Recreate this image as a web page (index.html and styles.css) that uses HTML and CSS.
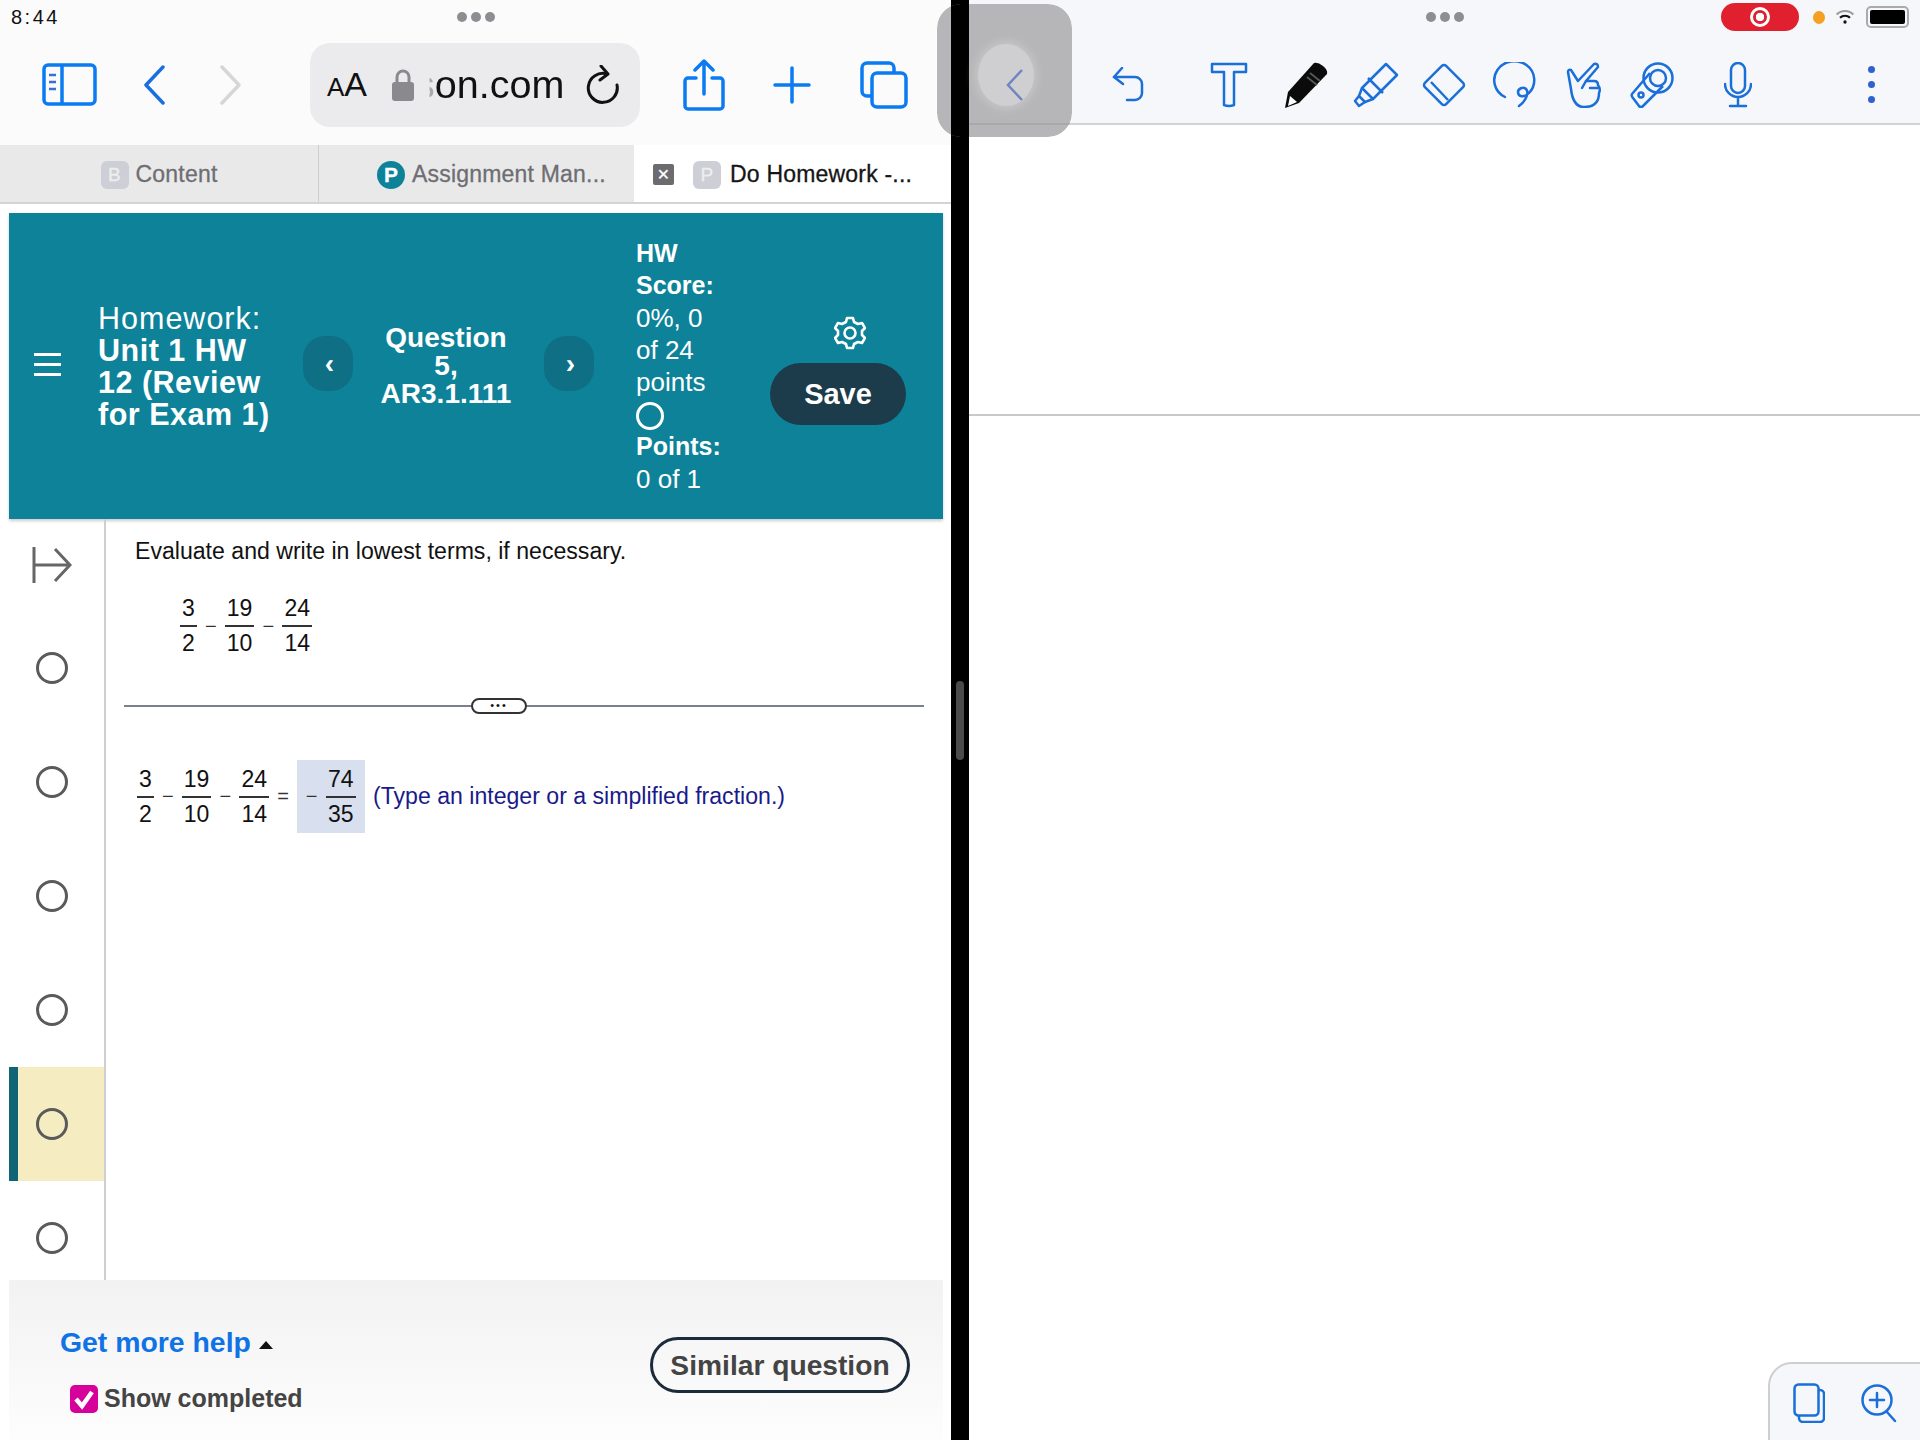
FILE: index.html
```html
<!DOCTYPE html>
<html lang="en">
<head>
    <meta charset="UTF-8">
    <title>Do Homework</title>
    <link rel="stylesheet" href="styles.css">
</head>
<body>
    <div class="screen">
        <!-- browser pane -->
        <div class="pane-left">
            <div class="status-row">
                <span class="clock">8:44</span>
                <span class="dots"><i></i><i></i><i></i></span>
                <span></span>
            </div>
            <div class="safari-bar">
                <svg class="ic-sidebar" viewBox="0 0 55 43" fill="none" stroke="#0a7bf0" stroke-width="3.5"><rect x="2" y="2" width="51" height="39" rx="4"/><path d="M20 2v39"/><path d="M7 12h7M7 19h7M7 26h7" stroke-width="2.5" stroke="#3b6fd0"/></svg>
                <svg class="ic-back" viewBox="0 0 22 40" fill="none" stroke="#1a6fe0" stroke-width="3.5" stroke-linecap="round" stroke-linejoin="round"><path d="M20 2 3 20l17 18"/></svg>
                <svg class="ic-forward" viewBox="0 0 22 40" fill="none" stroke="#d6d6d8" stroke-width="3.5" stroke-linecap="round" stroke-linejoin="round"><path d="M2 2l17 18L2 38"/></svg>
                <div class="url-pill">
                    <span class="aa"><small>A</small>A</span>
                    <svg class="ic-lock" viewBox="0 0 22 32"><path d="M5 14V8a6 6 0 0 1 12 0v6" fill="none" stroke="#8a8a8e" stroke-width="3"/><rect x="0" y="13" width="22" height="19" rx="3" fill="#8a8a8e"/></svg>
                    <span class="host">son.com</span>
                    <svg class="ic-reload" viewBox="0 0 34 40" fill="none" stroke="#111" stroke-width="3" stroke-linecap="round" stroke-linejoin="round"><path d="M21 9A14.500 14.500 0 1 0 31 20"/><path d="M15 1l7 8-8 6"/></svg>
                </div>
                <svg class="ic-share" viewBox="0 0 42 52" fill="none" stroke="#0a7bf0" stroke-width="3.500" stroke-linecap="round" stroke-linejoin="round"><path d="M13 19H5a3 3 0 0 0-3 3v25a3 3 0 0 0 3 3h32a3 3 0 0 0 3-3V22a3 3 0 0 0-3-3h-8"/><path d="M21 35V3M12 11l9-9 9 9"/></svg>
                <svg class="ic-plus" viewBox="0 0 38 38" fill="none" stroke="#0a7bf0" stroke-width="3.500" stroke-linecap="round"><path d="M19 2v34M2 19h34"/></svg>
                <svg class="ic-tabs" viewBox="0 0 48 48" fill="none" stroke="#0a7bf0" stroke-width="3.500"><path d="M11 35H7a5 5 0 0 1-5-5V7a5 5 0 0 1 5-5h22a5 5 0 0 1 5 5v4"/><rect x="12" y="12" width="34" height="34" rx="5"/></svg>
            </div>
            <div class="tab-strip">
                <div class="tab">
                    <span class="favicon">B</span><span>Content</span>
                </div>
                <div class="tab tab-mid">
                    <span class="favicon favicon-p">P</span><span>Assignment Man...</span>
                </div>
                <div class="tab tab-active">
                    <span class="tab-close">&times;</span>
                    <span class="favicon">P</span><span>Do Homework -...</span>
                </div>
            </div>

            <div class="page">
                <div class="hw-header">
                    <div class="burger"><i></i><i></i><i></i></div>
                    <div class="hw-title">Homework:<br><b>Unit 1 HW 12 (Review for Exam 1)</b></div>
                    <div class="nav-btn">&#8249;</div>
                    <div class="question-name">Question 5, AR3.1.111</div>
                    <div class="nav-btn nav-next">&#8250;</div>
                    <div class="score">
                        <b>HW Score:</b><br>0%, 0 of 24 points<br>
                        <span class="score-ring"></span><br>
                        <b>Points:</b><br>0 of 1
                    </div>
                    <div class="hw-actions">
                        <svg class="ic-gear" viewBox="0 0 32 34" fill="none" stroke="#fff" stroke-width="2.600" stroke-linejoin="round"><path d="M13 2h6l1 4 4 2 4-1 3 5-3 3v4l3 3-3 5-4-1-4 2-1 4h-6l-1-4-4-2-4 1-3-5 3-3v-4L1 12l3-5 4 1 4-2z"/><circle cx="16" cy="17" r="5.500"/></svg>
                        <div class="save-btn">Save</div>
                    </div>
                </div>

                <div class="work-area">
                    <div class="q-list">
                        <div class="q-first">
                            <svg class="ic-expand" viewBox="0 0 40 38" fill="none" stroke="#666" stroke-width="3"><path d="M2 1v36M2 19h35M23 3l15 16-15 16"/></svg>
                        </div>
                        <div class="q-row"><span class="ring"></span></div>
                        <div class="q-row"><span class="ring"></span></div>
                        <div class="q-row"><span class="ring"></span></div>
                        <div class="q-row"><span class="ring"></span></div>
                        <div class="q-row q-current"><span class="ring"></span></div>
                        <div class="q-row"><span class="ring"></span></div>
                    </div>
                    <div class="q-body">
                        <p class="prompt">Evaluate and write in lowest terms, if necessary.</p>
                        <div class="math math-given">
                            <span class="frac"><span>3</span><span>2</span></span><span class="op">&minus;</span>
                            <span class="frac"><span>19</span><span>10</span></span><span class="op">&minus;</span>
                            <span class="frac"><span>24</span><span>14</span></span>
                        </div>
                        <div class="rule"><span class="rule-pill">&bull;&bull;&bull;</span></div>
                        <div class="math math-answer">
                            <span class="frac"><span>3</span><span>2</span></span><span class="op">&minus;</span>
                            <span class="frac"><span>19</span><span>10</span></span><span class="op">&minus;</span>
                            <span class="frac"><span>24</span><span>14</span></span><span class="op">=</span>
                            <span class="answer-box"><span class="op">&minus;</span><span class="frac"><span>74</span><span>35</span></span></span>
                            <span class="hint">(Type an integer or a simplified fraction.)</span>
                        </div>
                    </div>
                </div>

                <div class="hw-footer">
                    <div class="help-col">
                        <div class="more-help">Get more help <span class="caret"></span></div>
                        <div class="completed">
                            <svg class="ic-check" viewBox="0 0 28 28"><rect width="28" height="28" rx="5" fill="#d6009b"/><path d="M6 14l6 7 10-14" fill="none" stroke="#fff" stroke-width="4.500"/></svg>
                            Show completed
                        </div>
                    </div>
                    <div class="similar-btn">Similar question</div>
                </div>
            </div>
        </div>

        <div class="divider"><span class="divider-handle"></span></div>

        <!-- notes pane -->
        <div class="pane-right">
            <div class="notes-bar">
                <div class="status-row">
                    <span></span>
                    <span class="dots"><i></i><i></i><i></i></span>
                    <span class="indicators">
                        <span class="rec-pill"><span class="rec-dot"></span></span>
                        <span class="orange-dot"></span>
                        <svg class="ic-wifi" viewBox="0 0 24 18" fill="none" stroke="#111" stroke-width="2.600"><path d="M2 6a14 14 0 0 1 20 0" stroke="#999"/><path d="M6 10a8.500 8.500 0 0 1 12 0"/><circle cx="12" cy="15" r="2" fill="#111" stroke="none"/></svg>
                        <span class="battery"><i></i></span>
                    </span>
                </div>
                <div class="notes-tools">
                    <svg class="t-undo" viewBox="0 0 32 36" fill="none" stroke="#1a6fd8" stroke-width="2.500" stroke-linecap="round" stroke-linejoin="round"><path d="M10 1 2 10l9 7"/><path d="M2 10h21a7 7 0 0 1 7 7v9a7 7 0 0 1-7 7h-8"/></svg>
                    <svg class="t-text" viewBox="0 0 38 46" fill="none" stroke="#1a6fd8" stroke-width="2.500" stroke-linejoin="round"><path d="M2 2h34v8H24v33q-5 2-10 0V10H2z"/></svg>
                    <svg class="t-pen" viewBox="0 0 44 46"><path d="M30 1q4-1 9 3t4 8L15 41 1 46l3-16z" fill="#0b0b0b"/><path d="M4 44l2-10 7 6z" fill="#fff"/><path d="M26 11l10 8M23 15l10 8" stroke="#555" stroke-width="2" fill="none"/></svg>
                    <svg class="t-marker" viewBox="0 0 46 46" fill="none" stroke="#1a6fd8" stroke-width="2.500" stroke-linejoin="round"><path d="M33 2l11 11-24 24-11-11z"/><path d="M15 16l15 15" /><path d="M9 26l-3 8 6 6 8-3"/><path d="M6 34l-4 5 4 5 6-4"/></svg>
                    <svg class="t-eraser" viewBox="0 0 46 46" fill="none" stroke="#1a6fd8" stroke-width="2.500" stroke-linejoin="round"><rect x="8" y="8" width="30" height="30" rx="3" transform="rotate(45 23 23)"/><path d="M10 20l17 18" /></svg>
                    <svg class="t-lasso" viewBox="0 0 44 46" fill="none" stroke="#1a6fd8" stroke-width="2.500" stroke-linecap="round"><path d="M12 35A20 19 0 1 1 36 31c-5 5-11 4-11-1 0-3 5-6 8-3s1 11-7 17"/></svg>
                    <svg class="t-hand" viewBox="0 0 36 46" fill="none" stroke="#1a6fd8" stroke-width="2.500" stroke-linecap="round" stroke-linejoin="round"><path d="M5 27 2 10q0-3 3-2l7 11L28 2q4-1 4 3L20 19h8q4 0 4 4 3 4 1 8 0 14-15 14Q7 45 5 27z"/><path d="M20 19l-4 7M24 26h8"/></svg>
                    <svg class="t-wand" viewBox="0 0 44 46" fill="none" stroke="#1a6fd8" stroke-width="2.500" stroke-linejoin="round"><circle cx="28" cy="16" r="14.500"/><circle cx="28" cy="16" r="8"/><path d="M20 11 2 32q-1 2 1 4l6 8q2 2 4 0l20-20"/><circle cx="11" cy="33" r="2.500"/></svg>
                    <svg class="t-mic" viewBox="0 0 28 46" fill="none" stroke="#1a6fd8" stroke-width="2.500" stroke-linecap="round"><rect x="7" y="1" width="14" height="30" rx="7"/><path d="M1 22a13 13 0 0 0 26 0M14 36v8M6 44h16"/></svg>
                    <div class="t-more"><i></i><i></i><i></i></div>
                </div>
            </div>
            <div class="note-page"></div>
            <div class="note-page-2"></div>
            <div class="page-tools">
                <svg class="ic-pages" viewBox="0 0 32 40" fill="none" stroke="#1a6fd8" stroke-width="2.500"><rect x="1.500" y="1.500" width="24" height="31" rx="4"/><path d="M25 7h2a4 4 0 0 1 4 4v24a4 4 0 0 1-4 4H10a4 4 0 0 1-4-4v-2"/></svg>
                <svg class="ic-zoom" viewBox="0 0 36 40" fill="none" stroke="#1a6fd8" stroke-width="2.500" stroke-linecap="round"><circle cx="16" cy="17" r="14.500"/><path d="M16 10v14M9 17h14M26 29l8 9"/></svg>
            </div>
        </div>

        <!-- slide over grab handle -->
        <div class="grab-overlay">
            <span class="grab-circle">
                <svg class="ic-grab" viewBox="0 0 18 34" fill="none" stroke="#6d85c0" stroke-width="2.500"><path d="M16 2 2 17l14 15"/></svg>
            </span>
        </div>
    </div>
</body>
</html>
```

FILE: styles.css
```css
* {
    box-sizing: border-box;
}

body {
    margin: 0;
    font-family: "Liberation Sans", Arial, sans-serif;
    color: #111;
    background: #000;
}

.screen {
    position: relative;
    display: flex;
    width: 1920px;
    height: 1440px;
    overflow: hidden;
}

.pane-left {
    width: 951px;
    height: 1440px;
    background: #fbfbfc;
    display: flex;
    flex-direction: column;
}

.divider {
    width: 18px;
    background: #000;
    padding-top: 681px;
    display: flex;
    justify-content: center;
}

.divider-handle {
    width: 8px;
    height: 79px;
    border-radius: 4px;
    background: #4b4b4d;
}

.pane-right {
    position: relative;
    flex: 1;
    background: #fff;
}

/* status row */
.status-row {
    display: grid;
    grid-template-columns: 1fr auto 1fr;
    align-items: center;
    height: 34px;
}

.clock {
    padding-left: 11px;
    font-size: 20px;
    letter-spacing: 2.500px;
}

.dots {
    display: flex;
    gap: 4px;
}

.dots i {
    width: 10px;
    height: 10px;
    border-radius: 50%;
    background: #8e8e92;
}

.indicators {
    display: flex;
    align-items: center;
    justify-content: flex-end;
    padding-right: 11px;
}

.rec-pill {
    width: 78px;
    height: 28px;
    border-radius: 14px;
    background: #e0202f;
    display: flex;
    align-items: center;
    justify-content: center;
}

.rec-dot {
    width: 20px;
    height: 20px;
    border: 3px solid #fff;
    border-radius: 50%;
    background: radial-gradient(circle, #fff 0 4px, #e0202f 4.500px);
}

.orange-dot {
    width: 12px;
    height: 13px;
    margin-left: 14px;
    border-radius: 50%;
    background: #f5a020;
}

.ic-wifi {
    width: 20px;
    height: 16px;
    margin-left: 10px;
}

.battery {
    width: 43px;
    height: 22px;
    margin-left: 11px;
    padding: 2px;
    border: 2px solid #aaa;
    border-radius: 5px;
}

.battery i {
    display: block;
    height: 100%;
    border-radius: 2px;
    background: #000;
}

/* safari toolbar */
.safari-bar {
    display: flex;
    align-items: center;
    height: 111px;
    padding: 0 0 10px 42px;
    background: #fbfbfc;
    flex-shrink: 0;
}

.ic-sidebar {
    width: 55px;
    height: 43px;
}

.ic-back {
    width: 22px;
    height: 40px;
    margin-left: 46px;
}

.ic-forward {
    width: 22px;
    height: 40px;
    margin-left: 55px;
}

.url-pill {
    display: flex;
    align-items: center;
    width: 330px;
    height: 84px;
    margin-left: 68px;
    padding-left: 17px;
    border-radius: 20px;
    background: #ebebed;
}

.aa {
    font-size: 34px;
    width: 42px;
    white-space: nowrap;
}

.aa small {
    font-size: 26px;
}

.ic-lock {
    width: 22px;
    height: 32px;
    margin-left: 23px;
}

/* the start of the host name fades out behind the lock */
.host {
    margin-left: 1px;
    font-size: 39.500px;
    white-space: nowrap;
    -webkit-mask-image: linear-gradient(90deg, transparent 14px, rgba(0, 0, 0, 0.3) 15px, rgba(0, 0, 0, 0.3) 20px, #000 20px);
    mask-image: linear-gradient(90deg, transparent 14px, rgba(0, 0, 0, 0.3) 15px, rgba(0, 0, 0, 0.3) 20px, #000 20px);
}

.ic-reload {
    width: 34px;
    height: 40px;
    margin-left: 22px;
}

.ic-share {
    width: 42px;
    height: 52px;
    margin-left: 43px;
}

.ic-plus {
    width: 38px;
    height: 38px;
    margin-left: 48px;
}

.ic-tabs {
    width: 48px;
    height: 48px;
    margin-left: 49px;
}

/* tabs */
.tab-strip {
    display: grid;
    grid-template-columns: 318px 316px 1fr;
    height: 59px;
    border-bottom: 2px solid #d4d4d6;
    font-size: 23px;
    letter-spacing: 0.200px;
    flex-shrink: 0;
}

.tab {
    display: flex;
    align-items: center;
    justify-content: center;
    gap: 7px;
    padding-top: 2px;
    background: #e9e9ea;
    color: #6e6e72;
    -webkit-text-stroke: 0.3px;
}

.tab-mid {
    justify-content: flex-start;
    padding-left: 58px;
    border-left: 1px solid #cfcfd1;
}

.tab-active {
    background: #fff;
    color: #151515;
    justify-content: flex-start;
    gap: 9px;
    padding-left: 19px;
}

.favicon {
    width: 28px;
    height: 28px;
    border-radius: 6px;
    background: #cdced6;
    color: #eee;
    font-size: 19px;
    display: flex;
    align-items: center;
    justify-content: center;
}

.favicon-p {
    border-radius: 50%;
    background: #0d8299;
    color: #fff;
    font-weight: bold;
    font-size: 21px;
}

.tab-close {
    width: 21px;
    height: 21px;
    margin-right: 10px;
    border-radius: 2px;
    background: #6c6c70;
    color: #fff;
    font-size: 20px;
    line-height: 20px;
    text-align: center;
}

/* homework page */
.page {
    flex: 1;
    display: flex;
    flex-direction: column;
    min-height: 0;
    padding: 9px 8px 0 9px;
    background: #fff;
}

.hw-header {
    display: flex;
    align-items: center;
    height: 306px;
    padding-left: 25px;
    background: #0d8299;
    color: #fff;
    flex-shrink: 0;
    box-shadow: 0 2px 3px rgba(0, 0, 0, 0.2);
}

.burger {
    display: flex;
    flex-direction: column;
    gap: 7px;
    width: 27px;
    margin-top: -4px;
}

.burger i {
    height: 3px;
    background: #fff;
}

.hw-title {
    width: 176px;
    margin-left: 37px;
    font-size: 30.500px;
    line-height: 32px;
    letter-spacing: 1px;
}

.hw-title b {
    letter-spacing: 0.500px;
}

.nav-btn {
    width: 50px;
    height: 55px;
    margin-left: 29px;
    margin-top: -5px;
    padding-left: 3px;
    border-radius: 22px;
    background: #0e6f85;
    font-size: 28px;
    font-weight: bold;
    display: flex;
    align-items: center;
    justify-content: center;
}

.question-name {
    width: 136px;
    margin: 0 30px 0 25px;
    font-size: 28px;
    font-weight: bold;
    line-height: 28px;
    text-align: center;
}

.nav-next {
    margin-left: 0;
}

.score {
    width: 92px;
    margin-left: 42px;
    font-size: 26px;
    line-height: 32.200px;
}

.score b {
    font-size: 25px;
}

.score-ring {
    display: inline-block;
    width: 28px;
    height: 28px;
    border: 3.500px solid #fff;
    border-radius: 50%;
    vertical-align: middle;
}

.hw-actions {
    width: 136px;
    margin-left: 42px;
    margin-top: 8px;
    display: flex;
    flex-direction: column;
    align-items: center;
    gap: 13px;
}

.ic-gear {
    width: 32px;
    height: 34px;
    margin-left: 24px;
}

.save-btn {
    width: 136px;
    height: 62px;
    border-radius: 31px;
    background: #1c3b4b;
    font-size: 29px;
    font-weight: bold;
    line-height: 62px;
    text-align: center;
}

.work-area {
    flex: 1;
    display: flex;
    min-height: 0;
    overflow: hidden;
}

.q-list {
    width: 97px;
    border-right: 2px solid #cfcfd2;
    flex-shrink: 0;
}

.q-first {
    height: 92px;
    padding: 27px 0 0 23px;
}

.ic-expand {
    width: 40px;
    height: 38px;
}

.q-row {
    height: 114px;
    padding-left: 27px;
    display: flex;
    align-items: center;
}

.q-current {
    padding-left: 18px;
    border-left: 9px solid #0f6475;
    background: #f6ecc2;
}

.ring {
    width: 32px;
    height: 32px;
    border: 3.500px solid #5a5a5a;
    border-radius: 50%;
}

.q-body {
    flex: 1;
    padding: 0 19px 0 18px;
    font-size: 23px;
}

.prompt {
    margin: 19px 0 0 11px;
    line-height: 26px;
    font-size: 23.100px;
}

.math {
    display: flex;
    align-items: center;
}

.math-given {
    margin: 28px 0 0 56px;
}

.math-answer {
    margin: 53px 0 0 13px;
}

.frac {
    display: inline-flex;
    flex-direction: column;
    align-items: stretch;
    text-align: center;
    line-height: 33px;
}

.frac > span {
    min-width: 16px;
    padding: 0 2px;
}

.frac > span:first-child {
    border-bottom: 2px solid #333;
}

.op {
    width: 28px;
    text-align: center;
    font-size: 20px;
    color: #333;
}

.answer-box {
    display: flex;
    align-items: center;
    width: 68px;
    height: 73px;
    background: #d8dfef;
}

.answer-box .op {
    width: 29px;
}

.hint {
    margin-left: 8px;
    color: #1a1a8a;
    font-size: 23.100px;
    white-space: nowrap;
}

.rule {
    display: flex;
    margin-top: 45px;
    padding-left: 347px;
    height: 2px;
    background: #7a808c;
    align-items: center;
}

.rule-pill {
    width: 56px;
    height: 16px;
    border: 2px solid #333;
    border-radius: 8px;
    background: #fff;
    font-size: 11px;
    line-height: 11px;
    letter-spacing: 2px;
    text-align: center;
}

.hw-footer {
    height: 160px;
    display: flex;
    justify-content: space-between;
    padding: 42px 33px 0 51px;
    background: linear-gradient(#f2f2f3, #fdfdfd);
    flex-shrink: 0;
}

.more-help {
    color: #0f72e5;
    font-size: 28.400px;
    font-weight: bold;
    line-height: 40px;
}

.caret {
    display: inline-block;
    width: 0;
    height: 0;
    border: 7px solid transparent;
    border-top: 0;
    border-bottom: 8px solid #111;
    vertical-align: middle;
}

.completed {
    display: flex;
    align-items: center;
    gap: 6px;
    margin: 22px 0 0 10px;
    color: #444;
    font-size: 25px;
    font-weight: bold;
}

.ic-check {
    width: 28px;
    height: 28px;
}

.similar-btn {
    width: 260px;
    height: 56px;
    margin-top: 15px;
    border: 3px solid #1c2b3a;
    border-radius: 28px;
    color: #444;
    font-size: 28.200px;
    font-weight: bold;
    line-height: 50px;
    text-align: center;
}

/* notes toolbar */
.notes-bar {
    height: 125px;
    background: #f6f7fb;
    border-bottom: 2px solid #d2d3d7;
}

.notes-tools {
    display: flex;
    align-items: center;
    height: 89px;
    padding: 12px 0 0 143px;
}

.t-undo {
    width: 32px;
    height: 36px;
}

.t-text {
    width: 38px;
    height: 46px;
    margin-left: 66px;
}

.t-pen {
    width: 44px;
    height: 46px;
    margin-left: 36px;
}

.t-marker {
    width: 46px;
    height: 46px;
    margin-left: 25px;
}

.t-eraser {
    width: 46px;
    height: 46px;
    margin-left: 22px;
}

.t-lasso {
    width: 44px;
    height: 46px;
    margin-left: 26px;
}

.t-hand {
    width: 36px;
    height: 46px;
    margin-left: 29px;
}

.t-wand {
    width: 44px;
    height: 46px;
    margin-left: 28px;
}

.t-mic {
    width: 28px;
    height: 46px;
    margin-left: 50px;
}

.t-more {
    display: flex;
    flex-direction: column;
    gap: 8px;
    margin-left: 116px;
}

.t-more i {
    width: 7px;
    height: 7px;
    border-radius: 50%;
    background: #2f62d0;
}

.note-page {
    height: 291px;
    border-bottom: 2px solid #c9c9cc;
}

.page-tools {
    position: absolute;
    right: -10px;
    bottom: -10px;
    display: flex;
    gap: 36px;
    width: 162px;
    height: 88px;
    padding: 19px 0 0 23px;
    border: 2px solid #cfcfd2;
    border-radius: 24px 0 0 0;
    background: #f6f7fb;
}

.ic-pages {
    width: 32px;
    height: 40px;
}

.ic-zoom {
    width: 36px;
    height: 40px;
}

.grab-overlay {
    position: absolute;
    left: 937px;
    top: 4px;
    width: 135px;
    height: 133px;
    border-radius: 24px;
    background: #b6b6b8;
    clip-path: inset(0 0 0 0 round 24px);
    display: flex;
    align-items: center;
    justify-content: center;
}

.grab-overlay::before {
    content: "";
    position: absolute;
    left: 14px;
    top: 0;
    width: 18px;
    height: 133px;
    background: #000;
}

.grab-overlay::after {
    content: "";
    position: absolute;
    left: 32px;
    right: 0;
    top: 119px;
    height: 2px;
    background: #a8a8aa;
}

.grab-circle {
    position: relative;
    width: 56px;
    height: 62px;
    margin: 8px 0 0 2px;
    border-radius: 50%;
    background: #cfcfd1;
    box-shadow: 0 0 8px 3px #c6c6c8;
    display: flex;
    align-items: center;
    justify-content: center;
}

.ic-grab {
    width: 18px;
    height: 34px;
    margin: 20px 0 0 18px;
}
```
